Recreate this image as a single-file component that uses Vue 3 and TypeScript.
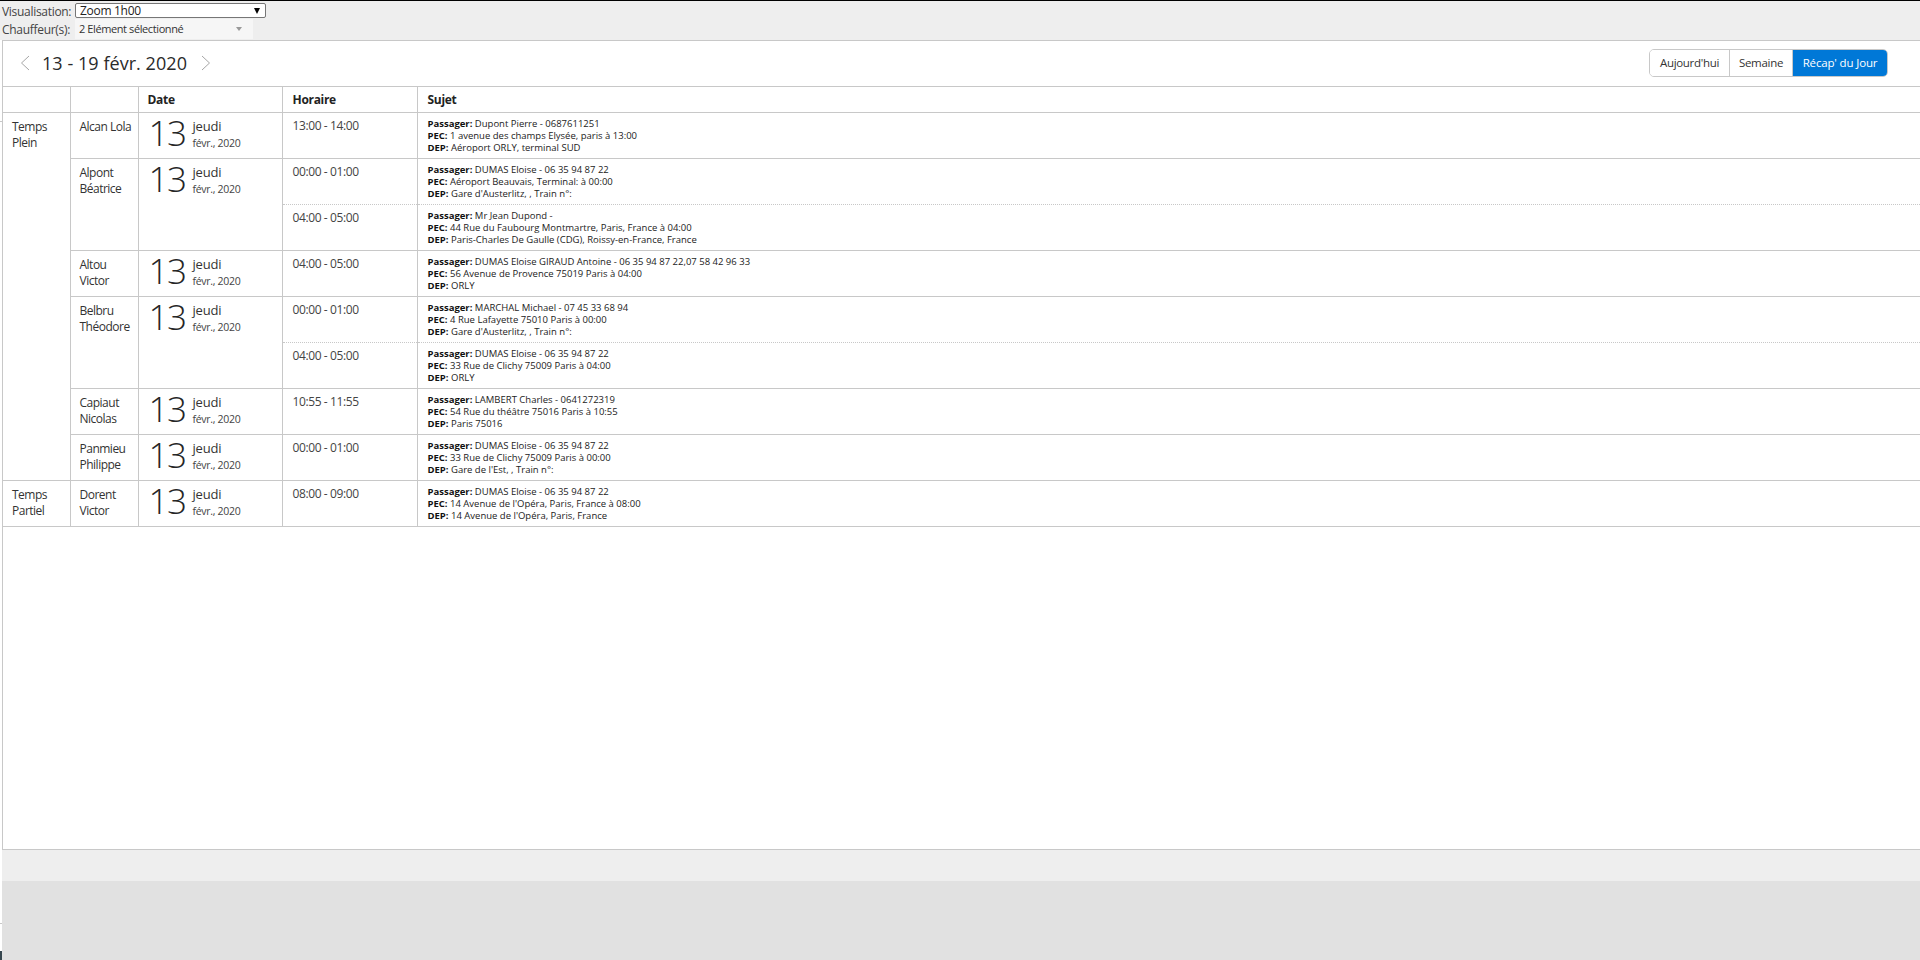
<script setup lang="ts">
interface Slot { time: string; pax: string; pec: string; dep: string }
interface Driver { name: string[]; group?: string[]; span?: number; slots: Slot[] }

const drivers: Driver[] = [
  { group: ['Temps', 'Plein'], span: 8, name: ['Alcan Lola'], slots: [
    { time: '13:00 - 14:00', pax: 'Dupont Pierre - 0687611251', pec: '1 avenue des champs Elysée, paris à 13:00', dep: 'Aéroport ORLY, terminal SUD' } ] },
  { name: ['Alpont', 'Béatrice'], slots: [
    { time: '00:00 - 01:00', pax: 'DUMAS Eloise - 06 35 94 87 22', pec: 'Aéroport Beauvais, Terminal: à 00:00', dep: "Gare d'Austerlitz, , Train n°:" },
    { time: '04:00 - 05:00', pax: 'Mr Jean Dupond -', pec: '44 Rue du Faubourg Montmartre, Paris, France à 04:00', dep: 'Paris-Charles De Gaulle (CDG), Roissy-en-France, France' } ] },
  { name: ['Altou', 'Victor'], slots: [
    { time: '04:00 - 05:00', pax: 'DUMAS Eloise GIRAUD Antoine - 06 35 94 87 22,07 58 42 96 33', pec: '56 Avenue de Provence 75019 Paris à 04:00', dep: 'ORLY' } ] },
  { name: ['Belbru', 'Théodore'], slots: [
    { time: '00:00 - 01:00', pax: 'MARCHAL Michael - 07 45 33 68 94', pec: '4 Rue Lafayette 75010 Paris à 00:00', dep: "Gare d'Austerlitz, , Train n°:" },
    { time: '04:00 - 05:00', pax: 'DUMAS Eloise - 06 35 94 87 22', pec: '33 Rue de Clichy 75009 Paris à 04:00', dep: 'ORLY' } ] },
  { name: ['Capiaut', 'Nicolas'], slots: [
    { time: '10:55 - 11:55', pax: 'LAMBERT Charles - 0641272319', pec: '54 Rue du théâtre 75016 Paris à 10:55', dep: 'Paris 75016' } ] },
  { name: ['Panmieu', 'Philippe'], slots: [
    { time: '00:00 - 01:00', pax: 'DUMAS Eloise - 06 35 94 87 22', pec: '33 Rue de Clichy 75009 Paris à 00:00', dep: "Gare de l'Est, , Train n°:" } ] },
  { group: ['Temps', 'Partiel'], span: 1, name: ['Dorent', 'Victor'], slots: [
    { time: '08:00 - 09:00', pax: 'DUMAS Eloise - 06 35 94 87 22', pec: "14 Avenue de l'Opéra, Paris, France à 08:00", dep: "14 Avenue de l'Opéra, Paris, France" } ] },
]
</script>

<template>
  <div class="page">
    <div class="filters">
      <div class="filter">
        <label class="flabel">Visualisation:</label>
        <div class="native">Zoom 1h00<span class="native-arrow"></span></div>
      </div>
      <div class="filter">
        <label class="flabel">Chauffeur(s):</label>
        <div class="multi">2 Elément sélectionné<span class="multi-arrow"></span></div>
      </div>
    </div>

    <div class="scheduler">
      <div class="toolbar">
        <div class="nav">
          <svg class="chev" width="12" height="16" viewBox="0 0 12 16"><path d="M10 1 L2.5 8 L10 15" fill="none" stroke="#a6a6a6" stroke-width="1"/></svg>
          <span class="range">13 - 19 févr. 2020</span>
          <svg class="chev" width="12" height="16" viewBox="0 0 12 16"><path d="M2 1 L9.5 8 L2 15" fill="none" stroke="#a6a6a6" stroke-width="1"/></svg>
        </div>
        <div class="views">
          <button class="view">Aujourd'hui</button>
          <button class="view">Semaine</button>
          <button class="view active">Récap' du Jour</button>
        </div>
      </div>

      <table class="agenda">
        <colgroup>
          <col class="c-group" /><col class="c-name" /><col class="c-date" /><col class="c-time" /><col />
        </colgroup>
        <thead>
          <tr>
            <th></th><th></th><th>Date</th><th class="wide">Horaire</th><th class="wide">Sujet</th>
          </tr>
        </thead>
        <tbody>
          <template v-for="d in drivers" :key="d.name.join()">
            <tr v-for="(s, i) in d.slots" :key="s.time" :class="{ sub: i > 0 }">
              <td v-if="i === 0 && d.group" :rowspan="d.span" class="group">
                <div v-for="w in d.group" :key="w">{{ w }}</div>
              </td>
              <td v-if="i === 0" :rowspan="d.slots.length" class="name">
                <div v-for="w in d.name" :key="w">{{ w }}</div>
              </td>
              <td v-if="i === 0" :rowspan="d.slots.length" class="date">
                <div class="date-in">
                  <span class="day">13</span>
                  <div class="date-txt">
                    <span class="dow">jeudi</span>
                    <span class="my">févr., 2020</span>
                  </div>
                </div>
              </td>
              <td class="time" :class="{ dotted: i < d.slots.length - 1, dottop: i > 0 }">{{ s.time }}</td>
              <td class="subject" :class="{ dotted: i < d.slots.length - 1, dottop: i > 0 }">
                <div><b>Passager:</b> {{ s.pax }}</div>
                <div><b>PEC:</b> {{ s.pec }}</div>
                <div><b>DEP:</b> {{ s.dep }}</div>
              </td>
            </tr>
          </template>
        </tbody>
      </table>
    </div>
    <div class="band"></div>
    <div class="foot"></div>
    <div class="edge-line edge-top"></div>
    <div class="edge-line"></div>
    <div class="edge-dark"></div>
  </div>
</template>

<style>
html, body { margin: 0; padding: 0; background: #fff; overflow: hidden; }
</style>

<style scoped>
.page {
  width: 1920px;
  height: 960px;
  box-sizing: border-box;
  border-top: 1px solid #000;
  background: #fff;
  font-family: "Open Sans", "Noto Sans", sans-serif;
  color: #2e2e2e;
  font-size: 12px;
  overflow: hidden;
  position: relative;
}
.filters {
  height: 39px;
  background: #eee;
  padding-top: 2px;
  box-sizing: border-box;
}
.filter { display: flex; align-items: center; height: 16px; margin-bottom: 2px; }
.flabel { width: 75px; padding-left: 2px; box-sizing: border-box; font-size: 12px; color: #444; letter-spacing: -.3px; white-space: nowrap; }
.native {
  align-self: flex-start;
  width: 191px; height: 15px; box-sizing: border-box; border: 1px solid #767676; background: #fff;
  border-radius: 2px; font-size: 12px; line-height: 13px; padding-left: 4px; position: relative; color: #222; letter-spacing: -.3px;
}
.native-arrow {
  position: absolute; right: 5px; top: 4px; width: 0; height: 0;
  border-left: 3px solid transparent; border-right: 3px solid transparent; border-top: 6px solid #000;
}
.multi {
  width: 178px; height: 20px; background: #f6f6f6; font-size: 11px; line-height: 20px; padding-left: 4px; box-sizing: border-box;
  position: relative; color: #333; letter-spacing: -.4px;
}
.multi-arrow {
  position: absolute; right: 11px; top: 8px; width: 0; height: 0;
  border-left: 3px solid transparent; border-right: 3px solid transparent; border-top: 4px solid #999;
}
.scheduler {
  height: 810px;
  margin-left: 2px;
  box-sizing: border-box;
  border-top: 1px solid #c8c8c8;
  border-left: 1px solid #c8c8c8;
  border-bottom: 1px solid #c8c8c8;
  background: #fff;
}
.toolbar {
  height: 45px;
  display: flex; align-items: center; justify-content: space-between;
  padding: 0 32px 2px 16px;
  box-sizing: border-box;
}
.nav { display: flex; align-items: center; }
.chev { display: block; }
.range { font-size: 18px; color: #2a2a2a; margin: 0 13px 0 11px; line-height: 24px; letter-spacing: .05px; }
.views { display: flex; height: 28px; border: 1px solid #c8c8c8; border-radius: 5px; box-sizing: border-box; overflow: hidden; }
.view {
  font: inherit; font-size: 11.5px; letter-spacing: -.3px; color: #333; background: #fff; border: 0; border-right: 1px solid #c8c8c8;
  padding: 0; height: 100%; width: 80px;
}
.view:nth-child(2) { width: 63px; }
.view.active { background: #0078d7; color: #fff; border-right: 0; width: 94px; letter-spacing: -.15px; }
.agenda {
  width: 1917px;
  border-collapse: collapse;
  table-layout: fixed;
  border-top: 1px solid #c8c8c8;
}
.c-group { width: 67px; }
.c-name { width: 68px; }
.c-date { width: 144px; }
.c-time { width: 135px; }
th, td { border: 1px solid #c8c8c8; border-left: 0; vertical-align: top; padding: 0; text-align: left; }
th:last-child, td:last-child { border-right: 0; }
th { height: 25px; font-size: 12px; font-weight: 700; padding-left: 9px; line-height: 25px; color: #222; letter-spacing: -.3px; }
th.wide { padding-left: 10px; }
td { font-size: 12px; }
td.group, td.name { line-height: 16px; padding: 6px 0 0 9px; letter-spacing: -.5px; color: #333; }
td.group { border-bottom: 1px solid #c8c8c8; }
.date { height: 45px; }
.date-in { display: flex; padding-left: 10px; height: 45px; }
.day { font-size: 35px; line-height: 40px; font-weight: 300; width: 44px; letter-spacing: -1.5px; color: #262626; }
.date-txt { display: flex; flex-direction: column; }
.dow { font-size: 13px; line-height: 16px; margin-top: 5px; color: #333; letter-spacing: -.2px; }
.my { font-size: 10.5px; line-height: 16px; margin-top: 1px; color: #444; letter-spacing: -.3px; }
.time { padding: 5px 0 0 10px; line-height: 16px; font-size: 12px; color: #444; letter-spacing: -.4px; height: 40px; }
.subject { padding: 5px 0 0 10px; font-size: 9.5px; line-height: 12px; color: #222; height: 40px; white-space: nowrap; }
.subject b { font-weight: 700; color: #111; }
td.dotted { border-bottom: 1px dotted #c8c8c8; }
td.dottop { border-top: 1px dotted #c8c8c8; }
.band { height: 31px; margin-left: 2px; background: #eee; }
.foot { height: 80px; margin-left: 2px; background: #e1e1e1; }
.edge-line { position: absolute; left: 0; top: 922px; width: 2px; height: 1px; background: #c8c8c8; }
.edge-top { top: 120px; }
.edge-dark { position: absolute; left: 0; top: 950px; width: 2px; height: 10px; background: #37474f; }
</style>
